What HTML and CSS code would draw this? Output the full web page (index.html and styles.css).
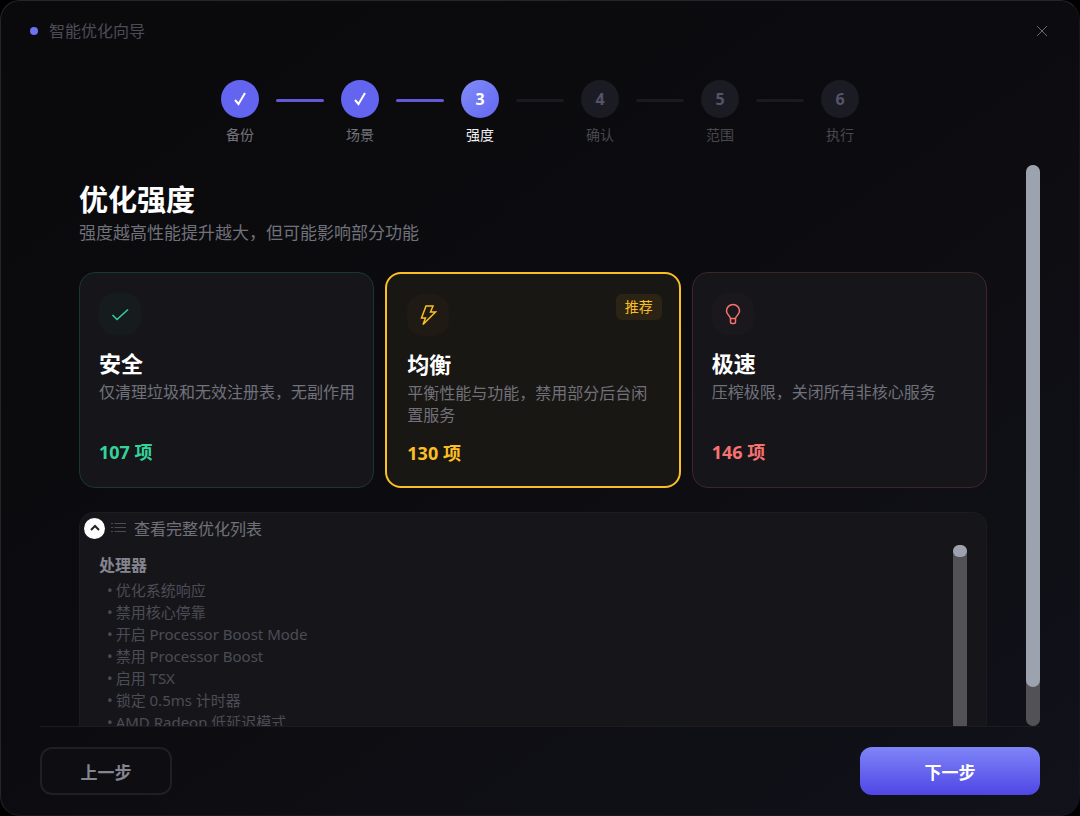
FILE: index.html
```html
<!DOCTYPE html>
<html lang="zh-CN">
<head>
  <meta charset="UTF-8" />
  <meta name="viewport" content="width=device-width, initial-scale=1.0" />
  <title>智能优化向导</title>
  <link rel="stylesheet" href="styles.css">
</head>
<body>
  <div class="wizard">
    <header class="titlebar">
      <span class="dot"></span>
      <span class="titlebar-text">智能优化向导</span>
      <button class="close" type="button" aria-label="关闭">
        <svg width="12" height="12" viewBox="0 0 12 12"><path d="M1 1l10 10M11 1L1 11" /></svg>
      </button>
    </header>

    <!-- Step indicator -->
    <ol class="steps">
      <li class="step done">
        <span class="circle"><svg width="16" height="16" viewBox="0 0 16 16"><path d="M3 9l3.500 4L13 2" /></svg></span>
        <span class="label">备份</span>
      </li>
      <li class="line active"></li>
      <li class="step done">
        <span class="circle"><svg width="16" height="16" viewBox="0 0 16 16"><path d="M3 9l3.500 4L13 2" /></svg></span>
        <span class="label">场景</span>
      </li>
      <li class="line active"></li>
      <li class="step current">
        <span class="circle">3</span>
        <span class="label">强度</span>
      </li>
      <li class="line"></li>
      <li class="step">
        <span class="circle">4</span>
        <span class="label">确认</span>
      </li>
      <li class="line"></li>
      <li class="step">
        <span class="circle">5</span>
        <span class="label">范围</span>
      </li>
      <li class="line"></li>
      <li class="step">
        <span class="circle">6</span>
        <span class="label">执行</span>
      </li>
    </ol>

    <div class="content">
      <main class="page">
        <h1>优化强度</h1>
        <p class="subtitle">强度越高性能提升越大，但可能影响部分功能</p>

        <div class="cards">
          <button class="card safe" type="button">
            <span class="card-top">
              <span class="icon">
                <svg width="22" height="22" viewBox="0 0 22 22"><path d="M3.500 12l4.500 4.500L19 6.500" /></svg>
              </span>
            </span>
            <span class="card-title">安全</span>
            <span class="desc">仅清理垃圾和无效注册表，无副作用</span>
            <span class="count">107 项</span>
          </button>

          <button class="card balanced" type="button">
            <span class="card-top">
              <span class="icon">
                <svg width="22" height="22" viewBox="0 0 22 22"><path d="M9 2h7l-2.500 6H18.500L6 20.500 8.500 14H4.500z" /></svg>
              </span>
              <span class="badge">推荐</span>
            </span>
            <span class="card-title">均衡</span>
            <span class="desc">平衡性能与功能，禁用部分后台闲置服务</span>
            <span class="count">130 项</span>
          </button>

          <button class="card extreme" type="button">
            <span class="card-top">
              <span class="icon">
                <svg width="22" height="22" viewBox="0 0 22 22"><path d="M8.500 15.500C8 12.500 4.500 11.500 4.500 8a6.500 6.500 0 0 1 13 0c0 3.500-3.500 4.500-4 7.500zM8.500 15.500v3.500q0 1.500 1.500 1.500h2q1.500 0 1.500-1.500v-3.500" /></svg>
              </span>
            </span>
            <span class="card-title">极速</span>
            <span class="desc">压榨极限，关闭所有非核心服务</span>
            <span class="count">146 项</span>
          </button>
        </div>

        <!-- Expandable list -->
        <section class="panel">
          <button class="panel-header" type="button" aria-expanded="true">
            <span class="toggle">
              <svg width="12" height="12" viewBox="0 0 12 12"><path d="M2 8l4-4 4 4" /></svg>
            </span>
            <svg class="list-icon" width="15" height="12" viewBox="0 0 15 12"><path d="M0 1.500h2M3.500 1.500H15M0 5.500h2M3.500 5.500H15M0 9.500h2M3.500 9.500H15" /></svg>
            <span>查看完整优化列表</span>
          </button>
          <div class="panel-body">
            <div class="group">
              <h2>处理器</h2>
              <ul>
                <li>优化系统响应</li>
                <li>禁用核心停靠</li>
                <li>开启 Processor Boost Mode</li>
                <li>禁用 Processor Boost</li>
                <li>启用 TSX</li>
                <li>锁定 0.5ms 计时器</li>
                <li>AMD Radeon 低延迟模式</li>
              </ul>
            </div>
            <div class="scrollbar"><div class="thumb small"></div></div>
          </div>
        </section>
      </main>
      <div class="scrollbar"><div class="thumb"></div></div>
    </div>

    <footer class="actions">
      <button class="btn" type="button">上一步</button>
      <button class="btn primary" type="button">下一步</button>
    </footer>
  </div>
</body>
</html>
```

FILE: styles.css
```css
* {
  box-sizing: border-box;
}

body {
  margin: 0;
  background: #000;
  color: #fff;
  font-family: "Noto Sans", "Noto Sans CJK SC", sans-serif;
}

button {
  font-family: inherit;
  color: inherit;
  cursor: pointer;
}

svg {
  fill: none;
  stroke: currentColor;
}

.wizard {
  display: flex;
  flex-direction: column;
  height: 100vh;
  padding: 0 39px 20px;
  border: 1px solid #26262a;
  border-right-color: #16161b;
  border-bottom-color: #18181e;
  border-radius: 20px;
  background: linear-gradient(145deg, #0a0a0c 0%, #0c0c10 50%, #11121a 100%);
}

/* Title bar */
.titlebar {
  display: flex;
  align-items: center;
  gap: 11px;
  height: 59px;
  margin: 0 -16px 0 -10px;
}

.dot {
  width: 8px;
  height: 8px;
  border-radius: 50%;
  background: #6f70f3;
}

.titlebar-text {
  flex: 1;
  font-size: 16px;
  line-height: 24px;
  color: #4c4c57;
}

.close {
  display: flex;
  padding: 8px;
  border: none;
  background: none;
  color: #6a6a74;
}

/* Steps */
.steps {
  display: flex;
  justify-content: center;
  margin: 0;
  padding: 20px 0 0;
  list-style: none;
}

.step {
  display: flex;
  flex-direction: column;
  align-items: center;
  gap: 7px;
  width: 72px;
}

.circle {
  display: flex;
  align-items: center;
  justify-content: center;
  width: 38px;
  height: 38px;
  border-radius: 50%;
  background: #1b1b23;
  color: #54546a;
  font-size: 16px;
  font-weight: 700;
}

.circle svg {
  stroke-width: 2;
}

.label {
  font-size: 14px;
  line-height: 20px;
  color: #484850;
}

.done .circle {
  background: #6365f1;
  color: #fff;
}

.done .label {
  color: #73737b;
}

.current .circle {
  background: linear-gradient(135deg, #818cf8, #6366f1);
  color: #fff;
}

.current .label {
  color: #f0f0f2;
}

.line {
  width: 48px;
  height: 3px;
  margin-top: 19px;
  border-radius: 2px;
  background: #1a1a1f;
}

.line.active {
  background: #6059d8;
}

/* Scrolling content */
.content {
  display: flex;
  flex: 1;
  min-height: 0;
  margin-top: 20px;
  overflow: hidden;
}

.page {
  flex: 1;
  padding: 17px 39px 0;
}

.scrollbar {
  flex: none;
  width: 14px;
  border-radius: 7px;
  background: #525256;
}

.thumb {
  height: 93%;
  border-radius: 7px;
  background: #9ca3af;
}

.thumb.small {
  height: 12px;
}

h1 {
  margin: 0;
  font-size: 29px;
  line-height: 36px;
}

.subtitle {
  margin: 3px 0 27px;
  font-size: 17px;
  line-height: 24px;
  color: #71717a;
}

/* Cards */
.cards {
  display: grid;
  grid-template-columns: repeat(3, 1fr);
  gap: 11px;
}

.card {
  display: flex;
  flex-direction: column;
  justify-content: flex-start;
  padding: 20px 16px 23px 19px;
  border: 1px solid;
  border-radius: 16px;
  background: #16161a;
  text-align: left;
}

.card-top {
  display: flex;
  align-items: flex-start;
  justify-content: space-between;
  margin-bottom: 14px;
}

.icon {
  display: flex;
  align-items: center;
  justify-content: center;
  width: 42px;
  height: 42px;
  border-radius: 16px;
}

.icon svg {
  stroke-width: 1.5;
}

.card-title {
  font-size: 22px;
  font-weight: 700;
  line-height: 28px;
  color: #fff;
}

.desc {
  min-height: 44px;
  margin: 4px 0 15px;
  font-size: 16px;
  line-height: 22px;
  color: #71717a;
}

.count {
  font-size: 18px;
  font-weight: 700;
  line-height: 24px;
}

.safe {
  border-color: #17392f;
  color: #34d399;
}

.safe .icon {
  background: #161b1d;
}

.balanced {
  padding: 20px 17px 21px 20px;
  border: 2px solid #fbbf24;
  background: #191714;
  color: #fbbf24;
}

.balanced .icon {
  background: #1f1b14;
}

.extreme {
  border-color: #412428;
  color: #f87171;
}

.extreme .icon {
  background: #1a181c;
}

.badge {
  padding: 2px 9px;
  border-radius: 6px;
  background: #2b2415;
  font-size: 14px;
  line-height: 22px;
}

/* Optimization list */
.panel {
  margin-top: 24px;
  border: 1px solid #1b1b20;
  border-radius: 14px;
  background: #16161a;
}

.panel-header {
  display: flex;
  align-items: center;
  height: 30px;
  margin-bottom: 2px;
  padding: 0 4px;
  border: none;
  background: none;
  color: #71717a;
  font-size: 16px;
}

.toggle {
  display: flex;
  align-items: center;
  justify-content: center;
  width: 21px;
  height: 21px;
  border-radius: 50%;
  background: #fff;
  color: #222;
}

.toggle svg {
  stroke-width: 2;
}

.list-icon {
  margin: 0 8px 0 6px;
  color: #4b4b55;
}

.panel-body {
  display: flex;
  justify-content: space-between;
  height: 300px;
  padding: 0 19px 16px;
}

.group h2 {
  margin: 8px 0 2px;
  font-size: 16px;
  line-height: 24px;
  color: #85858f;
}

.group ul {
  margin: 0;
  padding: 0 0 0 8px;
  list-style: none;
  font-size: 15px;
  line-height: 22px;
  color: #4c4c56;
}

.group li::before {
  content: "•";
  margin-right: 3px;
}

/* Footer */
.actions {
  display: flex;
  justify-content: space-between;
  padding-top: 20px;
  border-top: 1px solid #1b1b20;
}

.btn {
  width: 132px;
  height: 48px;
  border: 2px solid #1f1f25;
  border-radius: 12px;
  background: #0e0e12;
  color: #85858f;
  font-size: 17px;
  font-weight: 700;
}

.primary {
  width: 180px;
  border: none;
  background: linear-gradient(#7f85f8, #4f46e5);
  color: #fff;
}
```
